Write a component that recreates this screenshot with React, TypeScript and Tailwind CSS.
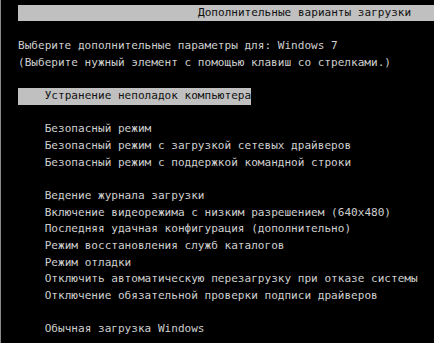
const safeModes = [
  "Безопасный режим",
  "Безопасный режим с загрузкой сетевых драйверов",
  "Безопасный режим с поддержкой командной строки",
];

const advanced = [
  "Ведение журнала загрузки",
  "Включение видеорежима с низким разрешением (640x480)",
  "Последняя удачная конфигурация (дополнительно)",
  "Режим восстановления служб каталогов",
  "Режим отладки",
  "Отключить автоматическую перезагрузку при отказе системы",
  "Отключение обязательной проверки подписи драйверов",
];

function Blank() {
  return <div className="h-[16.67px]" />;
}

function Option({ label }: { label: string }) {
  return <div className="h-[16.67px] pl-[26.7px] whitespace-pre">{label}</div>;
}

export default function App() {
  return (
    <div
      className="w-[434px] h-[343px] overflow-hidden bg-black border-l border-[#8a8a8a] text-[#cfcfcf] text-[11.07px] leading-[16.67px] pt-[4.7px] pl-[17px]"
      style={{ fontFamily: '"DejaVu Sans Mono", "Liberation Mono", monospace' }}
    >
      {/* title bar */}
      <div className="h-[16.67px] bg-[#c0c0c0] text-[#101010] pl-[180px] whitespace-pre">
        Дополнительные варианты загрузки
      </div>
      <Blank />
      <div className="h-[16.67px] whitespace-pre">Выберите дополнительные параметры для: Windows 7</div>
      <div className="h-[16.67px] whitespace-pre">(Выберите нужный элемент с помощью клавиш со стрелками.)</div>
      <Blank />
      <div className="h-[16.67px]">
        <span className="inline-block bg-[#c0c0c0] text-[#101010] pl-[26.7px] whitespace-pre">
          Устранение неполадок компьютера
        </span>
      </div>
      <Blank />
      {safeModes.map((m) => (
        <Option key={m} label={m} />
      ))}
      <Blank />
      {advanced.map((m) => (
        <Option key={m} label={m} />
      ))}
      <Blank />
      <Option label="Обычная загрузка Windows" />
    </div>
  );
}
